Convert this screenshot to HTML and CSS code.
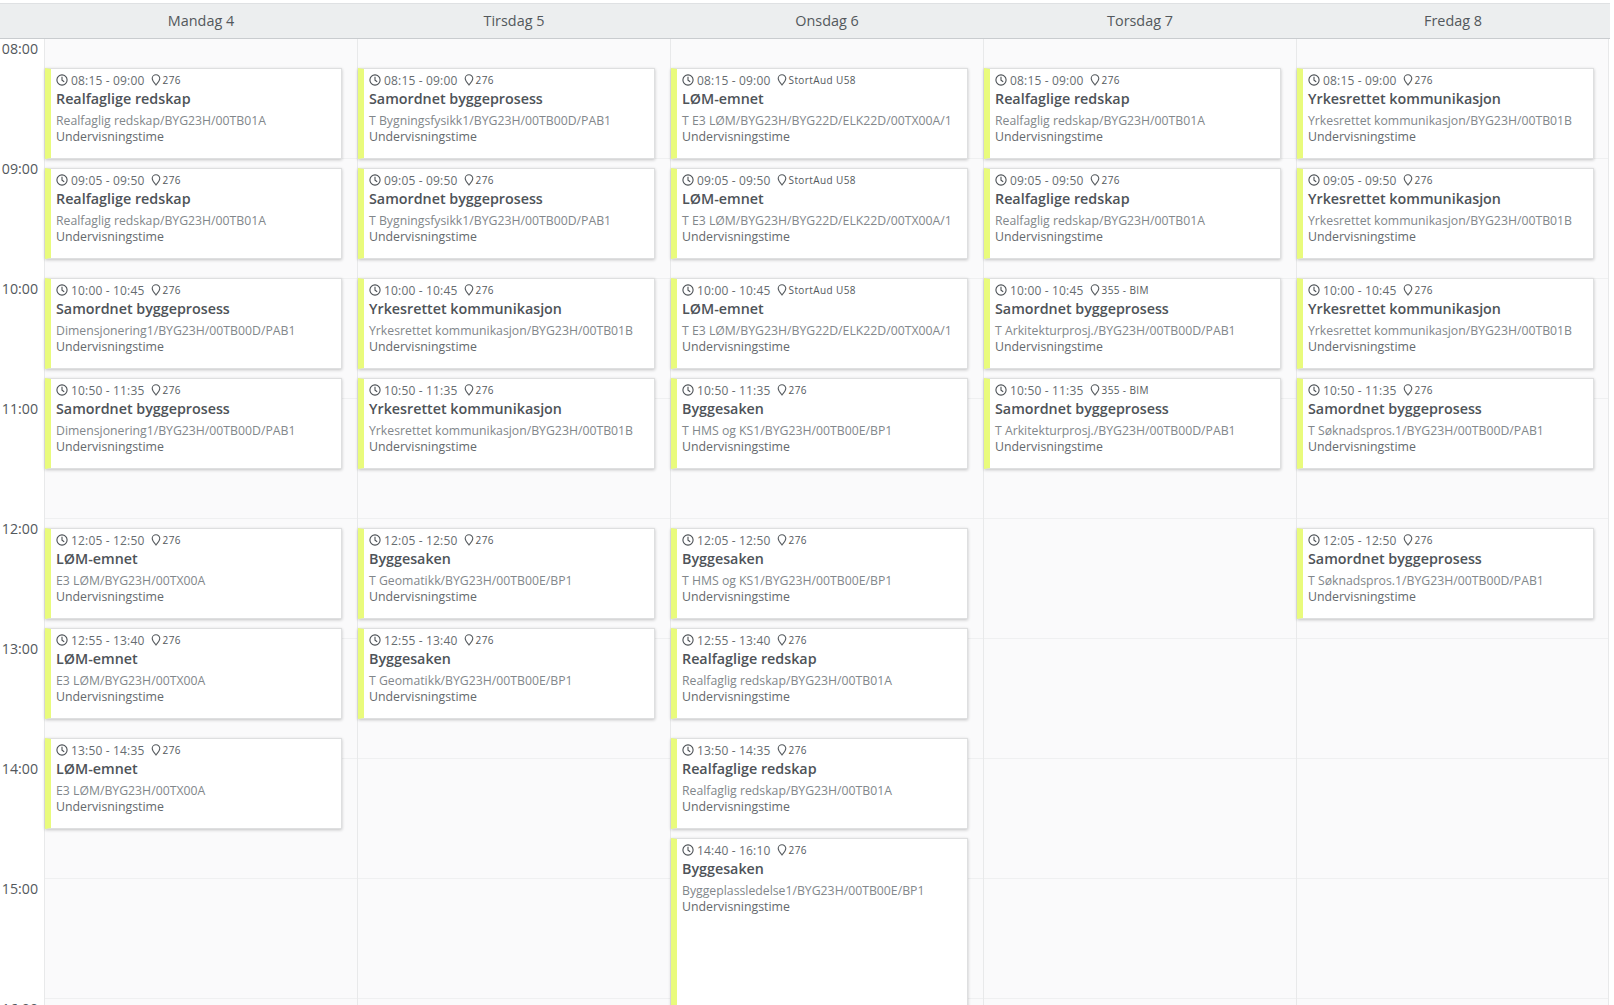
FILE: index.html
```html
<!DOCTYPE html>
<html lang="no">
<head>
<meta charset="utf-8">
<title>Timeplan</title>
<link rel="stylesheet" href="styles.css">
</head>
<body>
<svg class="defs" width="0" height="0" aria-hidden="true">
  <symbol id="clock" viewBox="0 0 12 12"><circle cx="6" cy="6" r="5.1" fill="none" stroke="currentColor" stroke-width="1.1"/><path d="M6 2.8V6.2L8.2 7.8" fill="none" stroke="currentColor" stroke-width="1.1"/></symbol>
  <symbol id="pin" viewBox="0 0 10 12"><path d="M5 11C3.6 9.2 1.2 6.8 1.2 4.6A3.8 3.8 0 0 1 8.8 4.6C8.8 6.8 6.4 9.2 5 11Z" fill="none" stroke="currentColor" stroke-width="1.1"/></symbol>
</svg>
<div class="calendar">
  <header class="head">
    <div class="head-gutter"></div>
    <div class="head-day">Mandag 4</div>
    <div class="head-day">Tirsdag 5</div>
    <div class="head-day">Onsdag 6</div>
    <div class="head-day">Torsdag 7</div>
    <div class="head-day">Fredag 8</div>
  </header>
  <main class="body">
    <div class="times">
      <div class="hour">08:00</div><div class="hour">09:00</div><div class="hour">10:00</div><div class="hour">11:00</div><div class="hour">12:00</div><div class="hour">13:00</div><div class="hour">14:00</div><div class="hour">15:00</div><div class="hour">16:00</div>
    </div>

    <section class="day">
      <article class="card s0815"><div class="meta"><svg class="ico-clock"><use href="#clock"/></svg><span>08:15 - 09:00</span><svg class="ico-pin"><use href="#pin"/></svg><span class="room">276</span></div><div class="title">Realfaglige redskap</div><div class="sub">Realfaglig redskap/BYG23H/00TB01A</div><div class="kind">Undervisningstime</div></article>
      <article class="card s0905"><div class="meta"><svg class="ico-clock"><use href="#clock"/></svg><span>09:05 - 09:50</span><svg class="ico-pin"><use href="#pin"/></svg><span class="room">276</span></div><div class="title">Realfaglige redskap</div><div class="sub">Realfaglig redskap/BYG23H/00TB01A</div><div class="kind">Undervisningstime</div></article>
      <article class="card s1000"><div class="meta"><svg class="ico-clock"><use href="#clock"/></svg><span>10:00 - 10:45</span><svg class="ico-pin"><use href="#pin"/></svg><span class="room">276</span></div><div class="title">Samordnet byggeprosess</div><div class="sub">Dimensjonering1/BYG23H/00TB00D/PAB1</div><div class="kind">Undervisningstime</div></article>
      <article class="card s1050"><div class="meta"><svg class="ico-clock"><use href="#clock"/></svg><span>10:50 - 11:35</span><svg class="ico-pin"><use href="#pin"/></svg><span class="room">276</span></div><div class="title">Samordnet byggeprosess</div><div class="sub">Dimensjonering1/BYG23H/00TB00D/PAB1</div><div class="kind">Undervisningstime</div></article>
      <article class="card s1205"><div class="meta"><svg class="ico-clock"><use href="#clock"/></svg><span>12:05 - 12:50</span><svg class="ico-pin"><use href="#pin"/></svg><span class="room">276</span></div><div class="title">LØM-emnet</div><div class="sub">E3 LØM/BYG23H/00TX00A</div><div class="kind">Undervisningstime</div></article>
      <article class="card s1255"><div class="meta"><svg class="ico-clock"><use href="#clock"/></svg><span>12:55 - 13:40</span><svg class="ico-pin"><use href="#pin"/></svg><span class="room">276</span></div><div class="title">LØM-emnet</div><div class="sub">E3 LØM/BYG23H/00TX00A</div><div class="kind">Undervisningstime</div></article>
      <article class="card s1350"><div class="meta"><svg class="ico-clock"><use href="#clock"/></svg><span>13:50 - 14:35</span><svg class="ico-pin"><use href="#pin"/></svg><span class="room">276</span></div><div class="title">LØM-emnet</div><div class="sub">E3 LØM/BYG23H/00TX00A</div><div class="kind">Undervisningstime</div></article>
    </section>

    <section class="day">
      <article class="card s0815"><div class="meta"><svg class="ico-clock"><use href="#clock"/></svg><span>08:15 - 09:00</span><svg class="ico-pin"><use href="#pin"/></svg><span class="room">276</span></div><div class="title">Samordnet byggeprosess</div><div class="sub">T Bygningsfysikk1/BYG23H/00TB00D/PAB1</div><div class="kind">Undervisningstime</div></article>
      <article class="card s0905"><div class="meta"><svg class="ico-clock"><use href="#clock"/></svg><span>09:05 - 09:50</span><svg class="ico-pin"><use href="#pin"/></svg><span class="room">276</span></div><div class="title">Samordnet byggeprosess</div><div class="sub">T Bygningsfysikk1/BYG23H/00TB00D/PAB1</div><div class="kind">Undervisningstime</div></article>
      <article class="card s1000"><div class="meta"><svg class="ico-clock"><use href="#clock"/></svg><span>10:00 - 10:45</span><svg class="ico-pin"><use href="#pin"/></svg><span class="room">276</span></div><div class="title">Yrkesrettet kommunikasjon</div><div class="sub">Yrkesrettet kommunikasjon/BYG23H/00TB01B</div><div class="kind">Undervisningstime</div></article>
      <article class="card s1050"><div class="meta"><svg class="ico-clock"><use href="#clock"/></svg><span>10:50 - 11:35</span><svg class="ico-pin"><use href="#pin"/></svg><span class="room">276</span></div><div class="title">Yrkesrettet kommunikasjon</div><div class="sub">Yrkesrettet kommunikasjon/BYG23H/00TB01B</div><div class="kind">Undervisningstime</div></article>
      <article class="card s1205"><div class="meta"><svg class="ico-clock"><use href="#clock"/></svg><span>12:05 - 12:50</span><svg class="ico-pin"><use href="#pin"/></svg><span class="room">276</span></div><div class="title">Byggesaken</div><div class="sub">T Geomatikk/BYG23H/00TB00E/BP1</div><div class="kind">Undervisningstime</div></article>
      <article class="card s1255"><div class="meta"><svg class="ico-clock"><use href="#clock"/></svg><span>12:55 - 13:40</span><svg class="ico-pin"><use href="#pin"/></svg><span class="room">276</span></div><div class="title">Byggesaken</div><div class="sub">T Geomatikk/BYG23H/00TB00E/BP1</div><div class="kind">Undervisningstime</div></article>
    </section>

    <section class="day">
      <article class="card s0815"><div class="meta"><svg class="ico-clock"><use href="#clock"/></svg><span>08:15 - 09:00</span><svg class="ico-pin"><use href="#pin"/></svg><span class="room">StortAud U58</span></div><div class="title">LØM-emnet</div><div class="sub">T E3 LØM/BYG23H/BYG22D/ELK22D/00TX00A/1</div><div class="kind">Undervisningstime</div></article>
      <article class="card s0905"><div class="meta"><svg class="ico-clock"><use href="#clock"/></svg><span>09:05 - 09:50</span><svg class="ico-pin"><use href="#pin"/></svg><span class="room">StortAud U58</span></div><div class="title">LØM-emnet</div><div class="sub">T E3 LØM/BYG23H/BYG22D/ELK22D/00TX00A/1</div><div class="kind">Undervisningstime</div></article>
      <article class="card s1000"><div class="meta"><svg class="ico-clock"><use href="#clock"/></svg><span>10:00 - 10:45</span><svg class="ico-pin"><use href="#pin"/></svg><span class="room">StortAud U58</span></div><div class="title">LØM-emnet</div><div class="sub">T E3 LØM/BYG23H/BYG22D/ELK22D/00TX00A/1</div><div class="kind">Undervisningstime</div></article>
      <article class="card s1050"><div class="meta"><svg class="ico-clock"><use href="#clock"/></svg><span>10:50 - 11:35</span><svg class="ico-pin"><use href="#pin"/></svg><span class="room">276</span></div><div class="title">Byggesaken</div><div class="sub">T HMS og KS1/BYG23H/00TB00E/BP1</div><div class="kind">Undervisningstime</div></article>
      <article class="card s1205"><div class="meta"><svg class="ico-clock"><use href="#clock"/></svg><span>12:05 - 12:50</span><svg class="ico-pin"><use href="#pin"/></svg><span class="room">276</span></div><div class="title">Byggesaken</div><div class="sub">T HMS og KS1/BYG23H/00TB00E/BP1</div><div class="kind">Undervisningstime</div></article>
      <article class="card s1255"><div class="meta"><svg class="ico-clock"><use href="#clock"/></svg><span>12:55 - 13:40</span><svg class="ico-pin"><use href="#pin"/></svg><span class="room">276</span></div><div class="title">Realfaglige redskap</div><div class="sub">Realfaglig redskap/BYG23H/00TB01A</div><div class="kind">Undervisningstime</div></article>
      <article class="card s1350"><div class="meta"><svg class="ico-clock"><use href="#clock"/></svg><span>13:50 - 14:35</span><svg class="ico-pin"><use href="#pin"/></svg><span class="room">276</span></div><div class="title">Realfaglige redskap</div><div class="sub">Realfaglig redskap/BYG23H/00TB01A</div><div class="kind">Undervisningstime</div></article>
      <article class="card s1440"><div class="meta"><svg class="ico-clock"><use href="#clock"/></svg><span>14:40 - 16:10</span><svg class="ico-pin"><use href="#pin"/></svg><span class="room">276</span></div><div class="title">Byggesaken</div><div class="sub">Byggeplassledelse1/BYG23H/00TB00E/BP1</div><div class="kind">Undervisningstime</div></article>
    </section>

    <section class="day">
      <article class="card s0815"><div class="meta"><svg class="ico-clock"><use href="#clock"/></svg><span>08:15 - 09:00</span><svg class="ico-pin"><use href="#pin"/></svg><span class="room">276</span></div><div class="title">Realfaglige redskap</div><div class="sub">Realfaglig redskap/BYG23H/00TB01A</div><div class="kind">Undervisningstime</div></article>
      <article class="card s0905"><div class="meta"><svg class="ico-clock"><use href="#clock"/></svg><span>09:05 - 09:50</span><svg class="ico-pin"><use href="#pin"/></svg><span class="room">276</span></div><div class="title">Realfaglige redskap</div><div class="sub">Realfaglig redskap/BYG23H/00TB01A</div><div class="kind">Undervisningstime</div></article>
      <article class="card s1000"><div class="meta"><svg class="ico-clock"><use href="#clock"/></svg><span>10:00 - 10:45</span><svg class="ico-pin"><use href="#pin"/></svg><span class="room">355 - BIM</span></div><div class="title">Samordnet byggeprosess</div><div class="sub">T Arkitekturprosj./BYG23H/00TB00D/PAB1</div><div class="kind">Undervisningstime</div></article>
      <article class="card s1050"><div class="meta"><svg class="ico-clock"><use href="#clock"/></svg><span>10:50 - 11:35</span><svg class="ico-pin"><use href="#pin"/></svg><span class="room">355 - BIM</span></div><div class="title">Samordnet byggeprosess</div><div class="sub">T Arkitekturprosj./BYG23H/00TB00D/PAB1</div><div class="kind">Undervisningstime</div></article>
    </section>

    <section class="day">
      <article class="card s0815"><div class="meta"><svg class="ico-clock"><use href="#clock"/></svg><span>08:15 - 09:00</span><svg class="ico-pin"><use href="#pin"/></svg><span class="room">276</span></div><div class="title">Yrkesrettet kommunikasjon</div><div class="sub">Yrkesrettet kommunikasjon/BYG23H/00TB01B</div><div class="kind">Undervisningstime</div></article>
      <article class="card s0905"><div class="meta"><svg class="ico-clock"><use href="#clock"/></svg><span>09:05 - 09:50</span><svg class="ico-pin"><use href="#pin"/></svg><span class="room">276</span></div><div class="title">Yrkesrettet kommunikasjon</div><div class="sub">Yrkesrettet kommunikasjon/BYG23H/00TB01B</div><div class="kind">Undervisningstime</div></article>
      <article class="card s1000"><div class="meta"><svg class="ico-clock"><use href="#clock"/></svg><span>10:00 - 10:45</span><svg class="ico-pin"><use href="#pin"/></svg><span class="room">276</span></div><div class="title">Yrkesrettet kommunikasjon</div><div class="sub">Yrkesrettet kommunikasjon/BYG23H/00TB01B</div><div class="kind">Undervisningstime</div></article>
      <article class="card s1050"><div class="meta"><svg class="ico-clock"><use href="#clock"/></svg><span>10:50 - 11:35</span><svg class="ico-pin"><use href="#pin"/></svg><span class="room">276</span></div><div class="title">Samordnet byggeprosess</div><div class="sub">T Søknadspros.1/BYG23H/00TB00D/PAB1</div><div class="kind">Undervisningstime</div></article>
      <article class="card s1205"><div class="meta"><svg class="ico-clock"><use href="#clock"/></svg><span>12:05 - 12:50</span><svg class="ico-pin"><use href="#pin"/></svg><span class="room">276</span></div><div class="title">Samordnet byggeprosess</div><div class="sub">T Søknadspros.1/BYG23H/00TB00D/PAB1</div><div class="kind">Undervisningstime</div></article>
    </section>
  </main>
</div>
</body>
</html>
```
FILE: styles.css
```css
* { box-sizing: border-box; }
html, body { margin: 0; height: 100%; overflow: hidden; background: #fff; }
body { font-family: "Open Sans", "Liberation Sans", sans-serif; color: #444a4f; }
.defs { position: absolute; }
.calendar { padding: 3px 4px 0 0; height: 1005px; overflow: hidden; }

.head { position: relative; z-index: 1; display: grid; grid-template-columns: 44px repeat(5, 313px) 1fr; height: 36px; background: #eceeef; border-top: 1px solid #dfe1e3; border-bottom: 1px solid #c9cccf; }
.head-day { text-align: center; padding-left: 1px; font-size: 14.4px; line-height: 33px; color: #53585c; }

.body { display: grid; grid-template-columns: 44px repeat(5, 313px) 1fr; margin-top: -1px; }
.times { background: #fff; padding-top: 1px; }
.hour { height: 120px; font-size: 14.2px; line-height: 20px; text-align: right; padding-right: 6px; color: #53585c; }

.day { display: grid; grid-template-rows: repeat(108, 10px); height: 1080px; background-color: #fafafb; background-image: repeating-linear-gradient(to bottom, #eff0f1 0, #eff0f1 1px, transparent 1px, transparent 120px); border-left: 1px solid #e8e9ea; padding-right: 15px; }
.day:last-child { border-right: 1px solid #e8e9ea; padding-right: 14px; }

.card { background: #fff; border: 1px solid #dedfe0; border-left: 6px solid #e9fb7c; box-shadow: 0 1px 3px rgba(0, 0, 0, .22); padding: 2px 5px 0 5px; margin-bottom: -1px; overflow: hidden; }
.s0815 { grid-row: 4 / 13; }
.s0905 { grid-row: 14 / 23; }
.s1000 { grid-row: 25 / 34; }
.s1050 { grid-row: 35 / 44; }
.s1205 { grid-row: 50 / 59; }
.s1255 { grid-row: 60 / 69; }
.s1350 { grid-row: 71 / 80; }
.s1440 { grid-row: 81 / 99; }

.meta { display: flex; align-items: center; height: 18px; font-size: 12px; letter-spacing: .17px; color: #686d71; white-space: nowrap; }
.ico-clock { width: 12px; height: 12px; margin-right: 3px; color: #4b5055; flex: none; }
.ico-pin { width: 10px; height: 12px; margin-left: 6px; margin-right: 2px; color: #555a5e; flex: none; }
.room { font-size: 10px; letter-spacing: .4px; color: #53585c; }
.title { font-size: 14.3px; font-weight: 600; line-height: 20px; color: #4e5358; white-space: nowrap; }
.sub { font-size: 12.25px; line-height: 16px; margin-top: 4px; color: #82878b; white-space: nowrap; }
.kind { font-size: 12.35px; line-height: 16px; color: #65696d; white-space: nowrap; }
```
